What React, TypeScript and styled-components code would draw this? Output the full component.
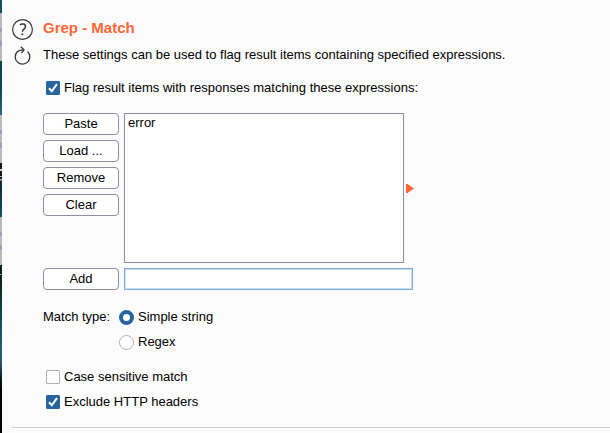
import React, { useState } from "react";
import styled, { createGlobalStyle } from "styled-components";

const GlobalStyle = createGlobalStyle`
  * { box-sizing: border-box; }
  body { margin: 0; background: #fbfbfb; }
`;

const Page = styled.div`
  display: flex;
  min-height: 100vh;
  background: #fbfbfb;
  color: #000;
  font: 13px/20px "Liberation Sans", Arial, sans-serif;
`;

const DesktopEdge = styled.div`
  flex: 0 0 2px;
  background: linear-gradient(
    #14506a 0 13px, #b9b9b9 13px 28px, #9c9cc0 28px 32px, #b9b9b9 32px 41px,
    #9c9cc0 41px 46px, #b9b9b9 46px 61px, #0f3f52 61px, #0e4a5c 90px, #2a6488 115px,
    #b9b9b9 115px 130px, #9c9cc0 130px 134px, #b9b9b9 134px 143px, #9c9cc0 143px 148px,
    #b9b9b9 148px 163px, #10191c 163px 169px, #d0d0d0 169px 171px, #10191c 171px 176px,
    #b0b0b0 176px 177px, #10191c 177px 179px, #b0b0b0 179px 180px, #0c2a36 181px,
    #14506e 217px, #b9b9b9 217px 232px, #9c9cc0 232px 236px, #b9b9b9 236px 245px,
    #9c9cc0 245px 250px, #b9b9b9 250px 265px, #04251f 265px 274px, #4aa0c8 274px 275px,
    #042018 275px, #0c4048 305px, #285c80 350px, #23516f 365px, #0a1418 380px, #000 390px
  );
`;

const Section = styled.section`
  flex: 1;
  min-width: 0;
  padding: 18px 0 0 10px;
`;

const Body = styled.div`
  display: grid;
  grid-template-columns: 22px 1fr;
  column-gap: 9px;
  padding-bottom: 15px;
  border-bottom: 1px solid #cfcfcf;
`;

const Tools = styled.div`
  display: flex;
  flex-direction: column;
  gap: 5px;
`;

const IconButton = styled.button`
  display: flex;
  padding: 0;
  border: 0;
  background: none;
  color: #383838;
`;

const Content = styled.div`
  display: flex;
  flex-direction: column;
`;

const Title = styled.h1`
  margin: 0;
  color: #ff6633;
  font-size: 15px;
  font-weight: bold;
  line-height: 20px;
`;

const Description = styled.p`
  margin: 7px 0 13px;
`;

const Options = styled.div`
  display: flex;
  flex-direction: column;
  gap: 5px;
  padding-left: 3px;
`;

const Choice = styled.label`
  display: flex;
  align-items: center;
  gap: 4px;
`;

const Check = styled.input.attrs({ type: "checkbox" })`
  appearance: none;
  width: 14px;
  height: 14px;
  margin: 0;
  border: 1px solid #b0b0b0;
  border-radius: 1px;
  background: #fff;
  &:checked {
    border-color: #2765a0;
    background: #2765a0;
  }
`;

const CheckBox = styled.span`
  display: grid;
  > * { grid-area: 1 / 1; }
  > svg { pointer-events: none; }
`;

const Radio = styled.input.attrs({ type: "radio" })`
  appearance: none;
  width: 15px;
  height: 15px;
  margin: 1px 0 0;
  border: 1px solid #b0b0b0;
  border-radius: 50%;
  background: #fff;
  &:checked { border: 4px solid #2765a0; }
`;

const Editor = styled.div`
  display: grid;
  grid-template-columns: 76px minmax(0, 290px);
  gap: 5px;
  margin: 15px 0 17px;
`;

const Actions = styled.div`
  display: flex;
  flex-direction: column;
  gap: 5px;
`;

const Button = styled.button`
  height: 22px;
  padding: 0;
  border: 1px solid #8e8ea3;
  border-radius: 4px;
  background: #fff;
  color: #000;
  font: inherit;
  line-height: 20px;
`;

const ListRow = styled.div`
  display: flex;
  align-items: center;
  gap: 2px;
`;

const List = styled.ul`
  flex: 1;
  height: 150px;
  margin: 0;
  padding: 0 3px;
  border: 1px solid #8e8ea3;
  background: #fff;
  list-style: none;
  line-height: 18px;
`;

const Expression = styled.input`
  width: 100%;
  max-width: 289px;
  height: 22px;
  padding: 0 3px;
  border: 1px solid #82aad7;
  outline: none;
  background: #fff;
  box-shadow: inset 0 0 0 1px #c8def5;
  font: inherit;
`;

const MatchType = styled.fieldset`
  display: grid;
  grid-template-columns: 76px 1fr;
  margin: 0 0 15px;
  padding: 0;
  border: 0;
`;

const Radios = styled.div`
  display: flex;
  flex-direction: column;
  gap: 5px;
`;

function CheckOption({ label, initial }: { label: string; initial: boolean }) {
  const [on, setOn] = useState(initial);
  return (
    <Choice>
      <CheckBox>
        <Check checked={on} onChange={() => setOn(!on)} />
        {on && (
          <svg width="14" height="14" viewBox="0 0 14 14" fill="none" stroke="#fff" strokeWidth="2">
            <path d="M3 7.2 5.8 10.2 11 3.2" />
          </svg>
        )}
      </CheckBox>
      {label}
    </Choice>
  );
}

function HelpIcon() {
  return (
    <svg width="22" height="22" viewBox="0 0 22 22" fill="none" stroke="currentColor">
      <circle cx="10.5" cy="11.5" r="9.9" strokeWidth="1.2" />
      <path d="M7.9 7C9.8 5.5 13.5 5.6 13.5 8.5c0 2.7-3.1 2.5-3.1 5.3" strokeWidth="1.5" />
      <circle cx="10.4" cy="16.3" r="1" fill="currentColor" stroke="none" />
    </svg>
  );
}

function ResetIcon() {
  return (
    <svg width="22" height="22" viewBox="0 0 22 22" fill="none" stroke="currentColor" strokeWidth="1.3">
      <path d="M15.5 6.5A7.3 7.3 0 1 1 5.2 6.8C6.9 5.2 8.8 4.7 12 4.8" />
      <path d="M8.8 1.8 12.1 4.8 9.4 8.2" />
    </svg>
  );
}

export default function App() {
  const [items, setItems] = useState(["error"]);
  const [text, setText] = useState("");
  const [type, setType] = useState("Simple string");
  const add = () => {
    if (text) setItems([...items, text]);
    setText("");
  };
  return (
    <>
      <GlobalStyle />
      <Page>
        <DesktopEdge />
        <Section>
          <Body>
            <Tools>
              <IconButton aria-label="Help"><HelpIcon /></IconButton>
              <IconButton aria-label="Restore defaults"><ResetIcon /></IconButton>
            </Tools>
            <Content>
              <Title>Grep - Match</Title>
              <Description>
                These settings can be used to flag result items containing specified expressions.
              </Description>
              <Options>
                <CheckOption label="Flag result items with responses matching these expressions:" initial />
              </Options>
              <Editor>
                <Actions>
                  <Button>Paste</Button>
                  <Button>Load ...</Button>
                  <Button onClick={() => setItems(items.slice(0, -1))}>Remove</Button>
                  <Button onClick={() => setItems([])}>Clear</Button>
                </Actions>
                <ListRow>
                  <List aria-label="Expressions">
                    {items.map((item, i) => <li key={i}>{item}</li>)}
                  </List>
                  <svg width="8" height="10" viewBox="0 0 8 10" fill="#ff6633">
                    <path d="M0 1H1.5L8 5.5 1.5 10H0Z" />
                  </svg>
                </ListRow>
                <Button onClick={add}>Add</Button>
                <Expression aria-label="New expression" value={text} onChange={(e) => setText(e.target.value)} />
              </Editor>
              <MatchType aria-label="Match type">
                <span>Match type:</span>
                <Radios>
                  {["Simple string", "Regex"].map((name) => (
                    <Choice key={name}>
                      <Radio name="match-type" checked={type === name} onChange={() => setType(name)} />
                      {name}
                    </Choice>
                  ))}
                </Radios>
              </MatchType>
              <Options>
                <CheckOption label="Case sensitive match" initial={false} />
                <CheckOption label="Exclude HTTP headers" initial />
              </Options>
            </Content>
          </Body>
        </Section>
      </Page>
    </>
  );
}
